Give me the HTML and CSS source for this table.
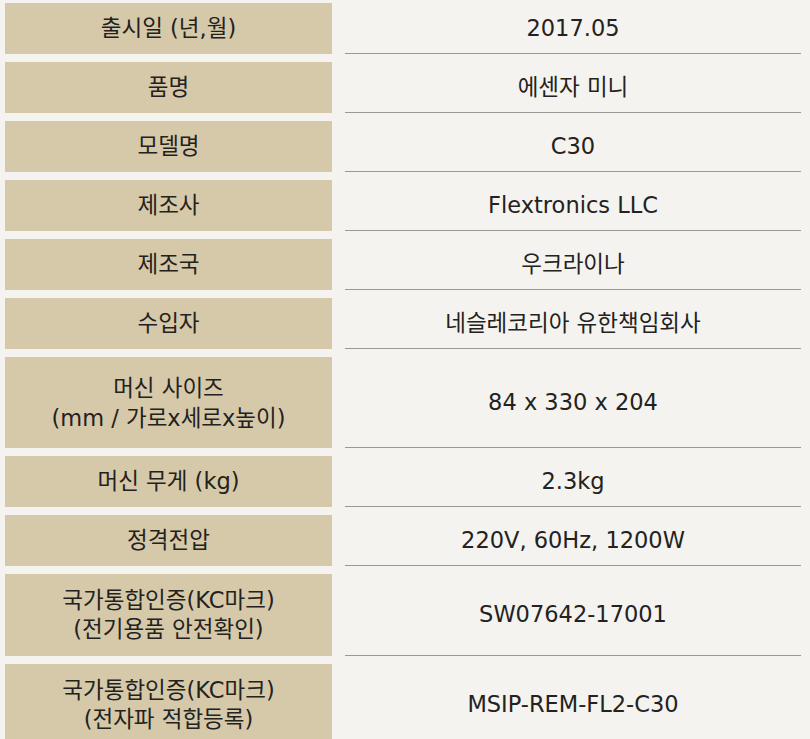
FILE: index.html
```html
<!DOCTYPE html>
<html lang="ko">
<head>
<meta charset="utf-8">
<title>제품 사양</title>
<link rel="stylesheet" href="styles.css">
</head>
<body>
<div class="spec">
  <div class="label">출시일 (년,월)</div><div class="value">2017.05</div>
  <div class="label">품명</div><div class="value">에센자 미니</div>
  <div class="label">모델명</div><div class="value">C30</div>
  <div class="label">제조사</div><div class="value">Flextronics LLC</div>
  <div class="label">제조국</div><div class="value">우크라이나</div>
  <div class="label">수입자</div><div class="value">네슬레코리아 유한책임회사</div>
  <div class="label tall">머신 사이즈<br>(mm / 가로x세로x높이)</div><div class="value tall">84 x 330 x 204</div>
  <div class="label">머신 무게 (kg)</div><div class="value">2.3kg</div>
  <div class="label">정격전압</div><div class="value">220V, 60Hz, 1200W</div>
  <div class="label double">국가통합인증(KC마크)<br>(전기용품 안전확인)</div><div class="value double">SW07642-17001</div>
  <div class="label double">국가통합인증(KC마크)<br>(전자파 적합등록)</div><div class="value double">MSIP-REM-FL2-C30</div>
</div>
</body>
</html>
```

FILE: styles.css
```css
html, body {
  margin: 0;
  padding: 0;
  background: #f4f3ef;
}
body {
  font-family: "DejaVu Sans", "Noto Sans CJK KR", sans-serif;
  color: #232220;
  font-size: 22.5px;
}
.spec {
  display: grid;
  grid-template-columns: 327px 456px;
  column-gap: 13px;
  row-gap: 8px;
  padding: 3px 0 0 5px;
}
.label, .value {
  height: 51px;
  box-sizing: border-box;
  display: flex;
  align-items: center;
  justify-content: center;
  text-align: center;
  line-height: 29px;
}
.label {
  background: #d6c9a9;
}
.value {
  border-bottom: 1px solid #9a9a95;
}
.tall {
  height: 91px;
  line-height: 30px;
}
.double {
  height: 82px;
}
```
